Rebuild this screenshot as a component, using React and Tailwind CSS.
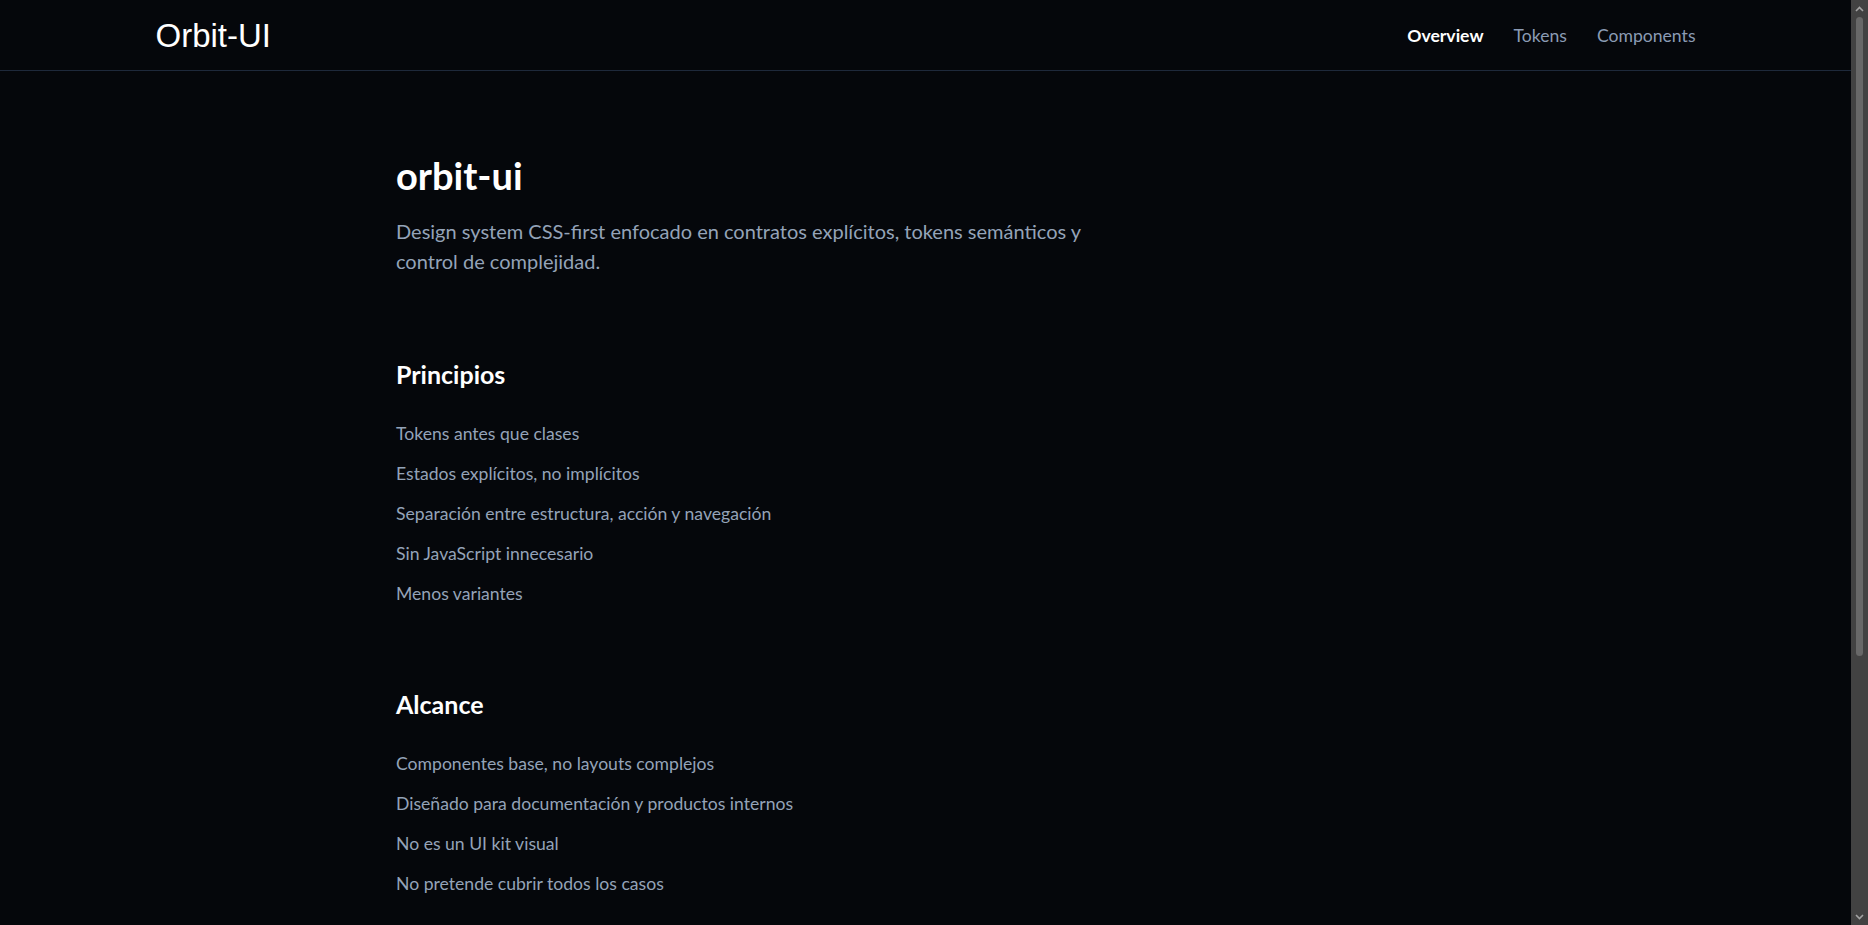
import React from "react";

const navItems = [
  { label: "Overview", active: true },
  { label: "Tokens" },
  { label: "Components" },
];

const principios = [
  "Tokens antes que clases",
  "Estados explícitos, no implícitos",
  "Separación entre estructura, acción y navegación",
  "Sin JavaScript innecesario",
  "Menos variantes",
];

const alcance = [
  "Componentes base, no layouts complejos",
  "Diseñado para documentación y productos internos",
  "No es un UI kit visual",
  "No pretende cubrir todos los casos",
];

const Section = ({ title, items, className }) => (
  <section className={className}>
    <h2 className="text-[25px] leading-[32px] font-bold text-white">{title}</h2>
    <ul className="mt-[24px]">
      {items.map((item) => (
        <li key={item} className="text-[17.6px] leading-[40px] text-[#94a3b8]">
          {item}
        </li>
      ))}
    </ul>
  </section>
);

// the browser scrollbar seen in the screenshot, drawn as a plain strip
const ScrollStrip = () => (
  <div aria-hidden="true" className="w-[17px] shrink-0 bg-[#424242] flex flex-col items-center">
    <div className="h-[17px] w-full flex items-center justify-center">
      <svg width="9" height="6" viewBox="0 0 9 6">
        <path d="M1 5 L4.5 1.5 L8 5" fill="none" stroke="#a3a3a3" strokeWidth="1.6" />
      </svg>
    </div>
    <div className="flex-1 w-full flex justify-center">
      <div className="w-[7px] h-[639px] rounded-full bg-[#686868]" />
    </div>
    <div className="h-[17px] w-full flex items-center justify-center">
      <svg width="9" height="6" viewBox="0 0 9 6">
        <path d="M1 1 L4.5 4.5 L8 1" fill="none" stroke="#a3a3a3" strokeWidth="1.6" />
      </svg>
    </div>
  </div>
);

export default function App() {
  return (
    <div className="flex h-screen bg-[#05070b] font-['Lato',sans-serif]">
      <div className="flex-1 min-w-0 overflow-y-auto [scrollbar-width:none]">
        <header className="border-b border-[#1e293b]">
          <div className="max-w-[1540px] mx-auto h-[70px] flex items-center justify-between">
            <span className="font-['Liberation_Sans',Arial,sans-serif] text-[33px] leading-none text-white">
              Orbit-UI
            </span>
            <nav className="flex items-center gap-[30px] pt-[2px]">
              {navItems.map((item) => (
                <a
                  key={item.label}
                  href="#"
                  className={`text-[17.6px] ${item.active ? "font-bold text-white" : "text-[#8b9bb4]"}`}
                >
                  {item.label}
                </a>
              ))}
            </nav>
          </div>
        </header>

        <main className="max-w-[1059px] mx-auto pt-[82px] pb-[386px]">
          <h1 className="text-[38px] leading-[44px] font-bold text-white">orbit-ui</h1>
          <p className="mt-[19px] max-w-[720px] text-[20px] leading-[30px] text-[#94a3b8]">
            Design system CSS-first enfocado en contratos explícitos, tokens semánticos y control de complejidad.
          </p>

          <Section title="Principios" items={principios} className="mt-[82px]" />
          <Section title="Alcance" items={alcance} className="mt-[74px]" />
        </main>
      </div>
      <ScrollStrip />
    </div>
  );
}
